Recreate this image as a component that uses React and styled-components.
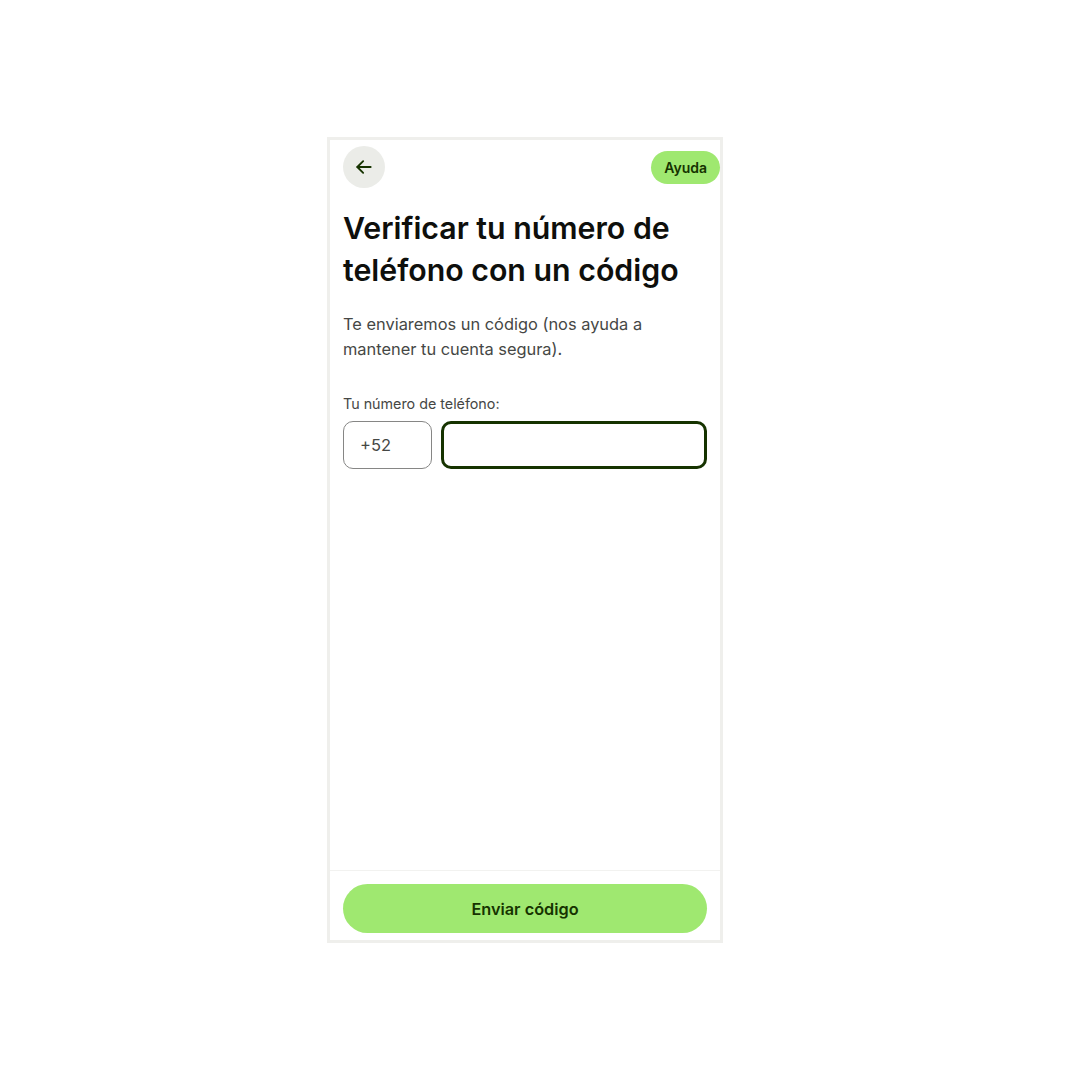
import styled, { createGlobalStyle } from 'styled-components'

const GlobalStyle = createGlobalStyle`
  html, body {
    margin: 0;
    padding: 0;
    background: #ffffff;
    font-family: Inter, 'Noto Sans', sans-serif;
    color: #0e0f0c;
  }
  * {
    box-sizing: border-box;
  }
`

const Page = styled.div`
  padding: 137px 0 0 327px;
`

const Phone = styled.div`
  width: 396px;
  height: 806px;
  border: 3px solid #efefec;
  background: #ffffff;
  display: flex;
  flex-direction: column;
`

const Header = styled.div`
  display: flex;
  justify-content: space-between;
  align-items: flex-start;
  padding: 6px 0 0 13px;
`

const BackButton = styled.button`
  width: 42px;
  height: 42px;
  border-radius: 50%;
  border: none;
  background: #ebece8;
  display: flex;
  align-items: center;
  justify-content: center;
  padding: 0;
  cursor: pointer;
`

const HelpPill = styled.button`
  margin-top: 5px;
  height: 33px;
  padding: 0 13px;
  border: none;
  border-radius: 17px;
  background: #9fe870;
  color: #163300;
  font-family: Inter, sans-serif;
  font-size: 14px;
  font-weight: 600;
  cursor: pointer;
`

const Body = styled.div`
  flex: 1;
  padding: 0 13px;
`

const Title = styled.h1`
  margin: 19px 0 0;
  font-size: 30.3px;
  line-height: 42px;
  font-weight: 600;
  letter-spacing: 0;
  color: #0e0f0c;
`

const Description = styled.p`
  margin: 21px 0 0;
  font-size: 16.4px;
  line-height: 25px;
  color: #454745;
`

const Label = styled.label`
  display: block;
  margin-top: 32px;
  font-size: 14.3px;
  line-height: 20px;
  color: #454745;
`

const InputRow = styled.div`
  display: flex;
  gap: 9px;
  margin-top: 7px;
`

const Field = styled.div`
  height: 48px;
  border-radius: 10px;
  border: ${(p) => (p.$focused ? '3px solid #163300' : '1px solid #868685')};
  flex: ${(p) => (p.$grow ? 1 : '0 0 89px')};
  display: flex;
  align-items: center;
  padding-left: ${(p) => (p.$focused ? '14px' : '16px')};
  font-size: 16.5px;
  color: #454745;
`

const Footer = styled.div`
  border-top: 1px solid #f2f2f0;
  padding: 13px 13px 7px;
`

const SubmitButton = styled.button`
  width: 100%;
  height: 49px;
  border: none;
  border-radius: 25px;
  background: #9fe870;
  color: #163300;
  font-family: Inter, sans-serif;
  font-size: 16.3px;
  font-weight: 600;
  cursor: pointer;
`

export default function App() {
  return (
    <Page>
      <GlobalStyle />
      <Phone>
        <Header>
          <BackButton aria-label="Volver">
            <svg width="20" height="20" viewBox="0 0 24 24" fill="none" stroke="#163300" strokeWidth="2.2" strokeLinecap="round" strokeLinejoin="round">
              <path d="M20 12H4" />
              <path d="M11 5l-7 7 7 7" />
            </svg>
          </BackButton>
          <HelpPill>Ayuda</HelpPill>
        </Header>
        <Body>
          <Title>
            Verificar tu número de
            <br />
            teléfono con un código
          </Title>
          <Description>
            Te enviaremos un código (nos ayuda a
            <br />
            mantener tu cuenta segura).
          </Description>
          <Label>Tu número de teléfono:</Label>
          <InputRow>
            <Field>+52</Field>
            <Field $grow $focused />
          </InputRow>
        </Body>
        <Footer>
          <SubmitButton>Enviar código</SubmitButton>
        </Footer>
      </Phone>
    </Page>
  )
}
